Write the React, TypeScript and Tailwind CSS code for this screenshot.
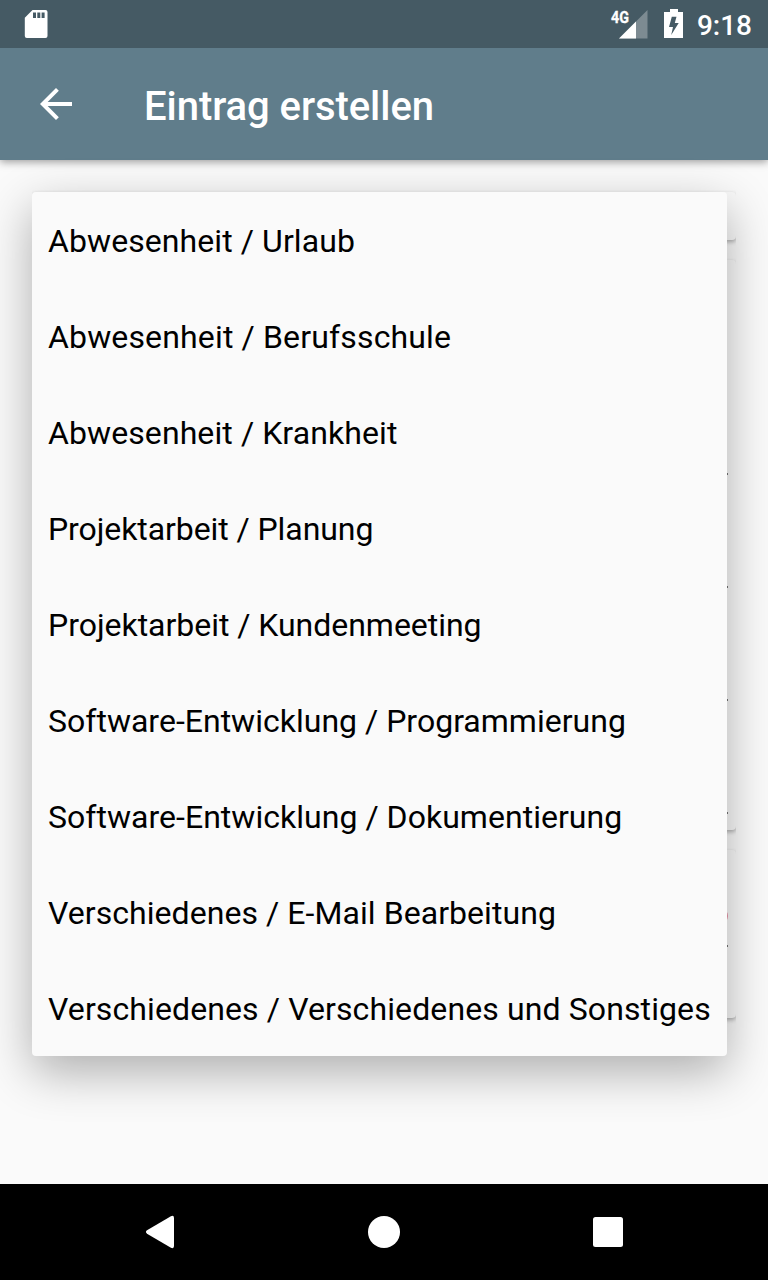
const categories = [
  { name: 'Abwesenheit / Urlaub', tracking: 'tracking-[0.08px]' },
  { name: 'Abwesenheit / Berufsschule', tracking: 'tracking-[0.15px]' },
  { name: 'Abwesenheit / Krankheit', tracking: 'tracking-[0.09px]' },
  { name: 'Projektarbeit / Planung', tracking: 'tracking-[-0.08px]' },
  { name: 'Projektarbeit / Kundenmeeting', tracking: 'tracking-[-0.03px]' },
  { name: 'Software-Entwicklung / Programmierung', tracking: 'tracking-[0.01px]' },
  { name: 'Software-Entwicklung / Dokumentierung', tracking: 'tracking-[0.03px]' },
  { name: 'Verschiedenes / E-Mail Bearbeitung', tracking: 'tracking-[0.06px]' },
  { name: 'Verschiedenes / Verschiedenes und Sonstiges', tracking: 'tracking-[0.11px]' },
];

const cardClass =
  'rounded bg-[#fafafa] shadow-[0_2px_4px_rgba(0,0,0,0.3)] [clip-path:inset(-2px_0_-8px_0)]';

function StatusBar() {
  return (
    <header className="relative z-10 flex h-12 shrink-0 items-center justify-between bg-[#455a64] text-white">
      <svg className="ml-6" width="24" height="48" viewBox="0 0 24 48" fill="currentColor">
        <path
          fillRule="evenodd"
          d="M8.500 10H21.500Q23.500 10 23.500 12V36Q23.500 38 21.500 38H2.800Q.8 38 .8 36V17.700ZM9 12.500V18H12V12.500ZM13.300 12.500V18H16.300V12.500ZM17.600 12.500V18H20.600V12.500Z"
        />
      </svg>
      <div className="flex h-12 items-center pr-4">
        <div className="relative h-12 w-9">
          <svg className="block" width="36" height="48" viewBox="0 0 36 48">
            <path d="M7 38.500L35.500 10V38.500Z" fill="#fff" fillOpacity=".3" />
            <path d="M7 38.500L24 21.500V38.500Z" fill="#fff" />
          </svg>
          <span className="absolute -left-px top-[9px] origin-left scale-x-[0.84] text-[17px] font-bold leading-4 [-webkit-text-stroke:0.3px_white]">
            4G
          </span>
        </div>
        <svg className="ml-4" width="20" height="48" viewBox="0 0 20 48" fill="currentColor">
          <path
            fillRule="evenodd"
            d="M6 9H14V12H19V38H0V12H6ZM7.800 16.700L5 27H9L7.200 35L14.700 23H10.800L12.500 16.700Z"
          />
        </svg>
        <span className="ml-[13px] pt-[3px] text-[28px] font-medium leading-8">9:18</span>
      </div>
    </header>
  );
}

function AppBar() {
  return (
    <div className="relative flex h-28 shrink-0 items-center bg-[#607d8b] text-white shadow-[0_2px_8px_rgba(0,0,0,0.38)]">
      <svg className="ml-8" width="48" height="48" viewBox="0 0 24 24" fill="currentColor">
        <path d="M20 11H7.830l5.590-5.590L12 4l-8 8 8 8 1.410-1.410L7.830 13H20v-2z" />
      </svg>
      <h1 className="ml-16 pt-1.5 text-[40px] font-medium leading-[48px] tracking-[-0.06px]">Eintrag erstellen</h1>
    </div>
  );
}

function EntryForm() {
  return (
    <div className="flex flex-col gap-5">
      <div className={`${cardClass} h-12`} />
      <div className={`${cardClass} flex h-[570px] flex-col items-end gap-[111px] pr-2 pt-[213px]`}>
        <div className="h-0.5 w-[640px] shrink-0 bg-[#757575]" />
        <div className="h-0.5 w-[640px] shrink-0 bg-[#757575]" />
        <div className="h-0.5 w-[640px] shrink-0 bg-[#757575]" />
        <div className="h-0.5 w-[640px] shrink-0 bg-[#757575]" />
      </div>
      <div className={`${cardClass} flex h-[168px] flex-col items-end pr-2 pt-[58px]`}>
        <div className="h-4 w-4 rounded-full bg-[#e991a5]" />
        <div className="mt-[21px] h-0.5 w-[640px] bg-[#757575]" />
      </div>
    </div>
  );
}

function CategoryMenu() {
  return (
    <ul className="absolute left-8 top-8 w-[695px] rounded-[4px] bg-[#fafafa] shadow-[0_16px_48px_rgba(0,0,0,0.31)]">
      {categories.map(({ name, tracking }) => (
        <li
          key={name}
          className={`flex h-24 items-center whitespace-nowrap px-4 pt-0.5 text-[32px] text-black ${tracking}`}
        >
          {name}
        </li>
      ))}
    </ul>
  );
}

function NavigationBar() {
  return (
    <nav className="relative flex h-24 shrink-0 items-center justify-between bg-black px-[136px] text-white">
      <svg width="48" height="48" viewBox="0 0 48 48" fill="currentColor">
        <path d="M11 22.300L34.500 8.400Q38 6.800 38 10V38Q38 41.200 34.500 39.600L11 25.700Q8.900 24 11 22.300Z" />
      </svg>
      <svg width="48" height="48" viewBox="0 0 48 48" fill="currentColor">
        <circle cx="24" cy="24" r="16" />
      </svg>
      <svg width="48" height="48" viewBox="0 0 48 48" fill="currentColor">
        <rect x="9" y="9" width="30" height="30" rx="2.500" />
      </svg>
    </nav>
  );
}

export default function App() {
  return (
    <div className="flex h-[1280px] w-[768px] flex-col overflow-hidden bg-[#fafafa] font-['Roboto',sans-serif]">
      <StatusBar />
      <AppBar />
      <main className="relative grow p-8">
        <EntryForm />
        <CategoryMenu />
      </main>
      <NavigationBar />
    </div>
  );
}
